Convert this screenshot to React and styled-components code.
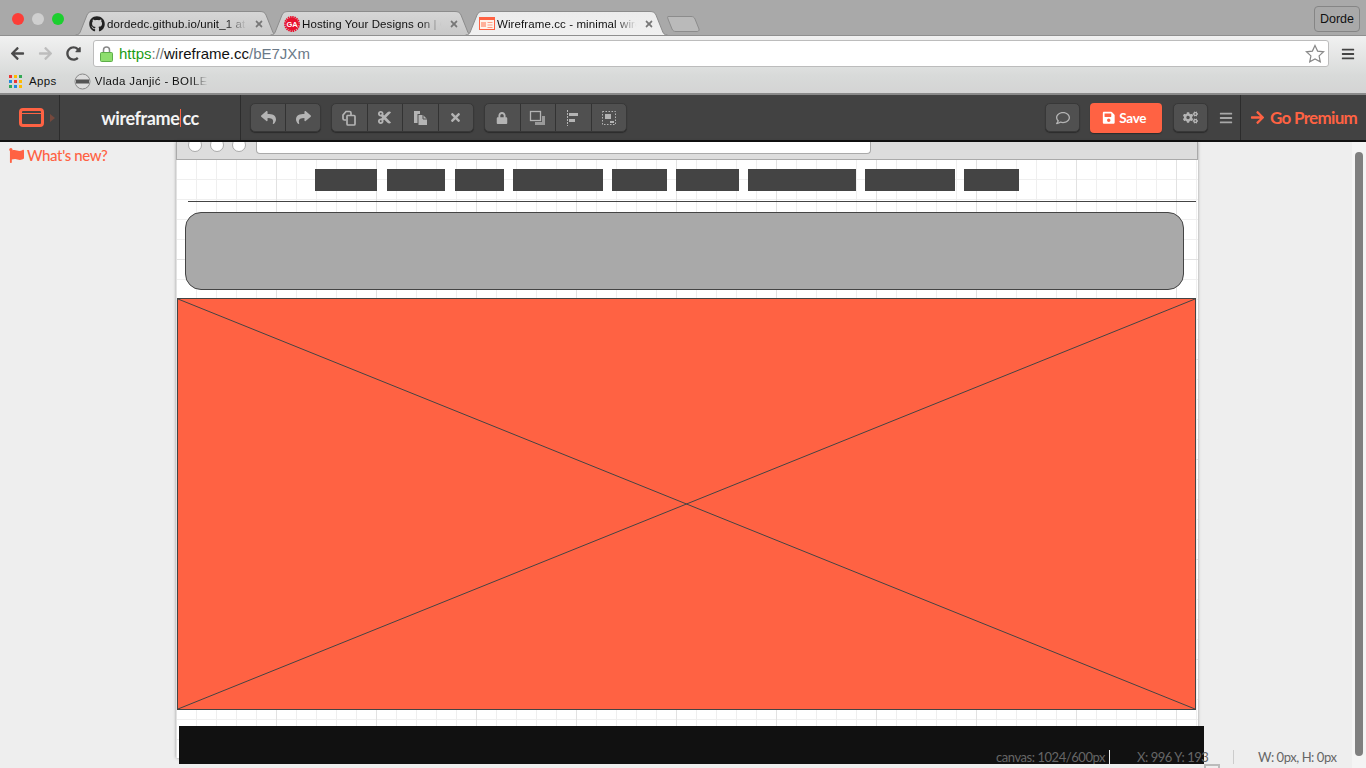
import React from "react";
import styled, { createGlobalStyle } from "styled-components";
import { FaGithub, FaReply, FaShare, FaCut, FaTimes, FaLock, FaSave, FaArrowRight, FaCogs, FaBars, FaRegComment, FaFlag, FaArrowLeft, FaRedoAlt } from "react-icons/fa";

const ORANGE = "#ff6243";
const DARK = "#444444";

const Global = createGlobalStyle`
  html, body { margin: 0; height: 768px; overflow: hidden; background: #eee; }
  * { box-sizing: border-box; }
`;

const Page = styled.div`
  width: 1366px; height: 768px; display: flex; flex-direction: column; overflow: hidden;
  font-family: "Liberation Sans", Arial, sans-serif;
`;

/* ---- browser chrome ---- */
const TabStrip = styled.div`
  height: 36px; flex: none; background: #a9a9a9; border-bottom: 1px solid #8f8f8f;
  display: flex; align-items: flex-end; padding: 0 6px 0 12px;
`;
const Lights = styled.div`display: flex; gap: 8px; align-self: flex-start; margin-top: 13px; width: 63px;`;
const Light = styled.span`width: 12px; height: 12px; border-radius: 50%; background: ${p => p.$c};`;
const Tabs = styled.div`display: flex; align-items: flex-end;`;
const TabWrap = styled.div`
  position: relative; width: 203px; height: 24px; margin-right: -8px; z-index: ${p => p.$active ? 2 : 1};
  display: flex; align-items: center; padding: 1px 14px 0 14px; gap: 2px; font-size: 11.5px; color: #111;
`;
const TabShape = styled.svg`position: absolute; inset: 0; width: 100%; height: 100%;`;
const TabIcon = styled.span`position: relative; width: 16px; height: 16px; display: flex; flex: none; font-size: 16px; color: #222;`;
const TabTitle = styled.span`
  position: relative; flex: 1; min-width: 0; white-space: nowrap; letter-spacing: .1px;
  -webkit-mask-image: linear-gradient(90deg, #000 84%, transparent 99%);
  mask-image: linear-gradient(90deg, #000 84%, transparent 99%);
`;
const TabClose = styled.span`position: relative; display: flex; font-size: 10px; color: #777; flex: none; margin-left: 4px;`;
const NewTab = styled.svg`width: 33px; height: 16px; margin: 0 0 3px 7px; flex: none;`;
const UserButton = styled.div`
  margin: 6px 0 auto auto; width: 46px; height: 26px; border: 1px solid #858585; border-radius: 4px;
  display: flex; align-items: center; justify-content: center; font-size: 12.5px; color: #111;
`;

const ChromeBody = styled.div`
  height: 59px; flex: none; background: linear-gradient(#f1f1f1, #d8dad9 70%, #d4d4d4);
  border-bottom: 2px solid #8a8a8a; display: flex; flex-direction: column;
`;
const NavRow = styled.div`height: 33px; display: flex; align-items: center; padding: 2px 11px 0 10px;`;
const NavBtn = styled.span`
  display: flex; width: 16px; font-size: 15px; margin-right: 12px; color: ${p => p.$c};
`;
const Omnibox = styled.div`
  width: 1237px; height: 27px; background: #fff; border: 1px solid #bcbcbc; border-radius: 3px; margin-left: -1px;
  display: flex; align-items: center; padding: 0 3px 0 6px; font-size: 15px;
`;
const UrlLock = styled.svg`width: 13px; height: 17px; margin-right: 6px; flex: none;`;
const UrlPart = styled.span`color: ${p => p.$c};`;
const Star = styled.svg`width: 20px; height: 20px; margin-left: auto;`;
const Menu = styled.span`display: flex; margin-left: 12px; font-size: 14px; color: #444;`;
const BookRow = styled.div`display: flex; align-items: center; height: 24px; padding: 0 0 0 9px; font-size: 11.5px; color: #111;`;
const AppsGrid = styled.div`display: grid; grid-template-columns: repeat(3, 3px); gap: 2px; margin-right: 7px;`;
const Dot = styled.span`width: 3px; height: 3px; background: ${p => p.$c};`;
const BookLabel = styled.span`
  letter-spacing: .35px; margin-right: ${p => p.$gap || 0}px; white-space: nowrap;
  ${p => p.$fade && `
    -webkit-mask-image: linear-gradient(90deg, #000 85%, transparent); mask-image: linear-gradient(90deg, #000 85%, transparent);`}
`;
const BookIcon = styled.svg`width: 17px; height: 17px; margin-right: 4px;`;

/* ---- app toolbar ---- */
const AppBar = styled.div`
  height: 47px; flex: none; background: #424242; border-bottom: 2px solid #111;
  display: flex; align-items: stretch;
`;
const LogoCell = styled.div`
  width: 60px; border-right: 1px solid #2c2c2c; display: flex; align-items: center; padding-left: 19px; gap: 6px;
`;
const Caret = styled.span`width: 0; height: 0; border-left: 5px solid #77493d; border-top: 4px solid transparent; border-bottom: 4px solid transparent;`;
const Brand = styled.div`
  width: 181px; border-right: 1px solid #2c2c2c; display: flex; align-items: center; justify-content: center;
  font-family: Lato, sans-serif; font-weight: 700; font-size: 18px; color: #f4f4f4; letter-spacing: -.4px;
`;
const BrandBar = styled.span`width: 1px; height: 18px; background: ${ORANGE}; margin: 0 1px;`;
const Groups = styled.div`display: flex; gap: 10px; padding: 8px 0 0 9px;`;
const Group = styled.div`
  display: flex; width: ${p => p.$w}px; height: 29px; background: #505050; border-radius: 5px;
  border: 1px solid #383838; box-shadow: 0 1px 1px #2c2c2c;
`;
const Tool = styled.div`
  flex: 1; display: flex; align-items: center; justify-content: center; color: #b4b4b4; font-size: ${p => p.$size || 13}px;
  & + & { border-left: 1px solid #333; }
`;
const ToolSvg = styled.svg`width: 18px; height: 18px;`;
const RightBar = styled.div`margin-left: auto; display: flex; align-items: stretch;`;
const RoundBtn = styled.div`
  width: 35px; height: 29px; margin-top: 8px; background: #505050; border: 1px solid #383838; border-radius: 5px;
  box-shadow: 0 1px 1px #2c2c2c; color: #b4b4b4; font-size: ${p => p.$size || 14}px;
  display: flex; align-items: center; justify-content: center;
`;
const SaveBtn = styled.div`
  width: 72px; height: 30px; margin: 8px 11px 0 10px; padding-right: 4px; background: ${ORANGE}; border-radius: 4px; color: #fff;
  box-shadow: 0 1px 1px #2c2c2c; font-family: Lato, sans-serif; font-weight: 700; font-size: 13.5px; letter-spacing: -.3px;
  display: flex; align-items: center; justify-content: center; gap: 4px;
`;
const BarsBtn = styled.div`display: flex; align-items: center; color: #a8a8a8; font-size: 14px; width: 33px; padding-left: 11px; border-right: 1px solid #2c2c2c;`;
const Premium = styled.div`
  width: 125px; display: flex; align-items: center; gap: 5px; padding-left: 9px; color: ${ORANGE};
  font-family: Lato, sans-serif; font-weight: 700; font-size: 17px; letter-spacing: -.7px; white-space: nowrap;
  & > svg { font-size: 15px; }
`;

/* ---- workspace ---- */
const Main = styled.div`position: relative; flex: 1; display: flex; background: #eee; min-height: 0;`;
const Side = styled.aside`
  width: 176px; flex: none; padding: 4px 0 0 9px; display: flex; align-items: flex-start; gap: 3px;
  color: ${ORANGE}; font-family: Lato, sans-serif; font-size: 15px; font-weight: 500; letter-spacing: -.4px; line-height: 18px;
`;
const Canvas = styled.section`
  position: relative; width: 1022px; height: 616px; flex: none;
  background-color: #fff;
  background-image:
    linear-gradient(90deg, #e2e2e2 1px, transparent 1px),
    linear-gradient(#e2e2e2 1px, transparent 1px),
    linear-gradient(90deg, #efefef 1px, transparent 1px),
    linear-gradient(#efefef 1px, transparent 1px);
  background-size: 100px 100px, 100px 100px, 20px 20px, 20px 20px;
  background-position: 0 17px, 0 17px, 0 17px, 0 17px;
  box-shadow: 0 0 3px rgba(0,0,0,.35);
`;
const MockChrome = styled.div`
  height: 18px; background: #ddd; border: 1px solid #aaa; border-top: 0; overflow: hidden;
  display: flex; padding-left: 11px; gap: 8px; position: relative;
`;
const MockDot = styled.span`width: 14px; height: 14px; margin-top: -4px; background: #fff; border: 1px solid #aaa; border-radius: 50%;`;
const MockUrl = styled.span`
  width: 615px; height: 12px; background: #fff; border: 1px solid #aaa; border-top: 0; border-radius: 0 0 4px 4px; margin-left: 2px;
`;
const Item = styled.div`
  position: absolute; left: ${p => p.$x}px; top: ${p => p.$y}px; width: ${p => p.$w}px; height: ${p => p.$h}px;
`;
const NavBlock = styled(Item)`background: ${DARK};`;
const Rule = styled(Item)`background: ${DARK};`;
const Hero = styled(Item)`background: #a9a9a9; border: 1px solid ${DARK}; border-radius: 16px;`;
const Photo = styled(Item)`background: ${ORANGE}; border: 1px solid ${DARK};`;
const PhotoX = styled.svg`display: block; width: 100%; height: 100%;`;
const Right = styled.div`flex: 1; display: flex; justify-content: flex-end;`;
const Track = styled.div`width: 14px; background: #f4f4f4; padding: 10px 3px 0 3px;`;
const Thumb = styled.div`height: 604px; background: #7f7f7f; border-radius: 4px;`;

const BlackBar = styled.div`
  position: absolute; left: 179px; top: 584px; width: 1025px; height: 38px; background: #111;
`;
const Status = styled.div`
  position: absolute; left: 996px; top: 608px; height: 14px; display: flex; align-items: center;
  font-family: Lato, sans-serif; font-size: 13px; letter-spacing: -.45px; color: #666; white-space: nowrap;
`;
const StatusText = styled.span`width: ${p => p.$w ? p.$w + "px" : "auto"}; margin-left: ${p => p.$ml || 0}px;`;
const StatusSep = styled.span`width: 1px; height: 14px; background: ${p => p.$c};`;
const Handle = styled.div`
  position: absolute; left: 1204px; top: 622px; width: 16px; height: 5px; border: 2px solid #bbb; border-bottom: 0;
`;

const TAB_PATH = "M0.5,24 C4,24 5,22 6,19 L12,4 C13,1.5 15,0.5 18,0.5 H185 C188,0.5 190,1.5 191,4 L197,19 C198,22 199,24 202.5,24";

function Tab({ active, icon, title, id }) {
  return (
    <TabWrap $active={active}>
      <TabShape viewBox="0 0 203 24" preserveAspectRatio="none">
        <defs>
          <linearGradient id={id} x1="0" y1="0" x2="0" y2="1">
            <stop offset="0" stopColor={active ? "#ececec" : "#d6d6d6"} />
            <stop offset="1" stopColor={active ? "#f0f0f0" : "#c8c8c8"} />
          </linearGradient>
        </defs>
        <path d={TAB_PATH} fill={`url(#${id})`} stroke="#8c8c8c" />
      </TabShape>
      <TabIcon>{icon}</TabIcon>
      <TabTitle>{title}</TabTitle>
      <TabClose><FaTimes /></TabClose>
    </TabWrap>
  );
}

const GaIcon = () => (
  <svg viewBox="0 0 16 16" width="16" height="16">
    <circle cx="8" cy="8" r="7" fill="none" stroke="#e8112d" strokeWidth="2" strokeDasharray="1.500 .7" />
    <circle cx="8" cy="8" r="6.500" fill="#e8112d" />
    <text x="8" y="10.800" textAnchor="middle" fontSize="7.500" fontWeight="700" fontFamily="Liberation Sans, sans-serif" fill="#fff">GA</text>
  </svg>
);
const WfIcon = () => (
  <svg viewBox="0 0 16 13" width="16" height="13" style={{ marginTop: 1 }}>
    <rect x=".5" y=".5" width="15" height="12" fill="#fff3ea" stroke={ORANGE} />
    <rect x="1" y="1" width="14" height="2" fill={ORANGE} />
    <rect x="2" y="5" width="5" height="5" fill="#ffb199" />
    <path d="M8.500 5.500h5M8.500 8h5M8.500 10.500h5" stroke="#ff9d85" />
  </svg>
);

const APP_COLORS = ["#e33", "#fb0", "#3a5", "#28d", "#e33", "#fb0", "#3a5", "#28d", "#fb0"];
const NAV = [[139, 62], [211, 58], [279, 49], [337, 90], [436, 55], [500, 63], [572, 108], [689, 90], [788, 55]];

export default function App() {
  return (
    <Page>
      <Global />
      <TabStrip>
        <Lights>
          <Light $c="#fc3e38" />
          <Light $c="#cfcfcf" />
          <Light $c="#1ccf2f" />
        </Lights>
        <Tabs>
          <Tab id="t1" icon={<FaGithub />} title="dordedc.github.io/unit_1 at" />
          <Tab id="t2" icon={<GaIcon />} title="Hosting Your Designs on | G" />
          <Tab id="t3" active icon={<WfIcon />} title="Wireframe.cc - minimal wire" />
        </Tabs>
        <NewTab viewBox="0 0 33 16">
          <path d="M1,.5 H24 C26,.5 27,1 28,3 L32,13 C32.500,15 31,15.500 30,15.500 H9 C7,15.500 6,15 5,13 L1,3 C.5,1.500 .5,.5 1,.5Z" fill="#bababa" stroke="#8c8c8c" />
        </NewTab>
        <UserButton>Dorde</UserButton>
      </TabStrip>

      <ChromeBody>
        <NavRow>
          <NavBtn $c="#4a4a4a"><FaArrowLeft /></NavBtn>
          <NavBtn $c="#bdbdbd"><FaArrowRight /></NavBtn>
          <NavBtn $c="#4a4a4a"><FaRedoAlt /></NavBtn>
          <Omnibox>
            <UrlLock viewBox="0 0 13 17">
              <path d="M3.500 8V5a3 3 0 0 1 6 0v3" fill="none" stroke="#888" strokeWidth="1.500" />
              <rect x=".5" y="7.500" width="12" height="9" rx="1" fill="#8ede6e" stroke="#5eae4a" />
            </UrlLock>
            <UrlPart $c="#1b9c17">https</UrlPart>
            <UrlPart $c="#777">://</UrlPart>
            <UrlPart $c="#111">wireframe.cc</UrlPart>
            <UrlPart $c="#6b7a88">/bE7JXm</UrlPart>
            <Star viewBox="0 0 20 20">
              <path d="M10 1.500l2.600 5.600 6 .7-4.500 4.100 1.200 6L10 15l-5.300 2.900 1.200-6L1.400 7.800l6-.7z" fill="none" stroke="#888" strokeWidth="1.200" />
            </Star>
          </Omnibox>
          <Menu><FaBars /></Menu>
        </NavRow>
        <BookRow>
          <AppsGrid>{APP_COLORS.map((c, i) => <Dot key={i} $c={c} />)}</AppsGrid>
          <BookLabel $gap={17}>Apps</BookLabel>
          <BookIcon viewBox="0 0 17 17">
            <circle cx="8.500" cy="8.500" r="7.500" fill="#ddd" stroke="#888" />
            <rect x="2" y="6.500" width="13" height="4" fill="#555" />
          </BookIcon>
          <BookLabel $fade>Vlada Janjić - BOILE</BookLabel>
        </BookRow>
      </ChromeBody>

      <AppBar>
        <LogoCell>
          <svg viewBox="0 0 25 19" width="25" height="19">
            <rect x="1.500" y="1.500" width="22" height="16" rx="2.500" fill="none" stroke={ORANGE} strokeWidth="3" />
            <path d="M2 5.500h21" stroke={ORANGE} strokeWidth="1" />
          </svg>
          <Caret />
        </LogoCell>
        <Brand>wireframe<BrandBar />cc</Brand>
        <Groups>
          <Group $w={71}>
            <Tool $size={15}><FaReply /></Tool>
            <Tool $size={15}><FaShare /></Tool>
          </Group>
          <Group $w={143}>
            <Tool>
              <ToolSvg viewBox="0 0 18 18" fill="none" stroke="#b4b4b4" strokeWidth="1.700">
                <path d="M6 11H4.500a1.500 1.500 0 0 1-1.500-1.500V6l3-3.500h3.500A1.500 1.500 0 0 1 11 4v2" />
                <path d="M7.500 6.500H14a1 1 0 0 1 1 1V15a1 1 0 0 1-1 1H8a1 1 0 0 1-1-1V7z" />
              </ToolSvg>
            </Tool>
            <Tool $size={15}><FaCut /></Tool>
            <Tool>
              <ToolSvg viewBox="0 0 18 18">
                <path d="M3 2h6v3H6.500v9H3z" fill="#b4b4b4" />
                <path d="M7.500 6H12l4 4v6H7.500z" fill="#b4b4b4" />
                <path d="M12 6v4h4" fill="none" stroke="#505050" />
              </ToolSvg>
            </Tool>
            <Tool $size={13}><FaTimes /></Tool>
          </Group>
          <Group $w={143}>
            <Tool $size={12}><FaLock /></Tool>
            <Tool>
              <ToolSvg viewBox="0 0 18 18">
                <rect x="1.500" y="2.500" width="10" height="9" fill="none" stroke="#b4b4b4" strokeWidth="1.300" />
                <path d="M13 7h3v9H6v-3h7z" fill="#9a9a9a" />
              </ToolSvg>
            </Tool>
            <Tool>
              <ToolSvg viewBox="0 0 18 18">
                <path d="M3.500 1v16" stroke="#b4b4b4" strokeDasharray="2 1" />
                <rect x="5" y="4" width="9" height="3" fill="#b4b4b4" />
                <rect x="5" y="10" width="6" height="3" fill="#b4b4b4" />
              </ToolSvg>
            </Tool>
            <Tool>
              <ToolSvg viewBox="0 0 18 18">
                <rect x="2.500" y="2.500" width="13" height="13" fill="none" stroke="#b4b4b4" strokeDasharray="1.500 1.500" />
                <rect x="5" y="5" width="6" height="5" fill="#b4b4b4" />
                <rect x="10" y="12" width="4" height="2" fill="#b4b4b4" />
              </ToolSvg>
            </Tool>
          </Group>
        </Groups>
        <RightBar>
          <RoundBtn><FaRegComment /></RoundBtn>
          <SaveBtn><FaSave />Save</SaveBtn>
          <RoundBtn $size={15}><FaCogs /></RoundBtn>
          <BarsBtn><FaBars /></BarsBtn>
          <Premium><FaArrowRight />Go Premium</Premium>
        </RightBar>
      </AppBar>

      <Main>
        <Side><FaFlag style={{ marginTop: 2, flex: "none" }} />What's new?</Side>
        <Canvas>
          <MockChrome>
            <MockDot /><MockDot /><MockDot />
            <MockUrl />
          </MockChrome>
          {NAV.map(([x, w]) => <NavBlock key={x} $x={x} $y={27} $w={w} $h={22} />)}
          <Rule $x={12} $y={59} $w={1008} $h={1} />
          <Hero $x={9} $y={70} $w={999} $h={78} />
          <Photo $x={1} $y={156} $w={1019} $h={412}>
            <PhotoX viewBox="0 0 1017 410" preserveAspectRatio="none">
              <path d="M0 0L1017 410M1017 0L0 410" stroke={DARK} strokeWidth="1" fill="none" />
            </PhotoX>
          </Photo>
        </Canvas>
        <Right>
          <Track><Thumb /></Track>
        </Right>
        <BlackBar />
        <Status>
          <StatusText $w={113}>canvas: 1024/600px</StatusText>
          <StatusSep $c="#eee" />
          <StatusText $w={96} $ml={27}>X: 996 Y: 193</StatusText>
          <StatusSep $c="#ccc" />
          <StatusText $ml={24}>W: 0px, H: 0px</StatusText>
        </Status>
        <Handle />
      </Main>
    </Page>
  );
}
